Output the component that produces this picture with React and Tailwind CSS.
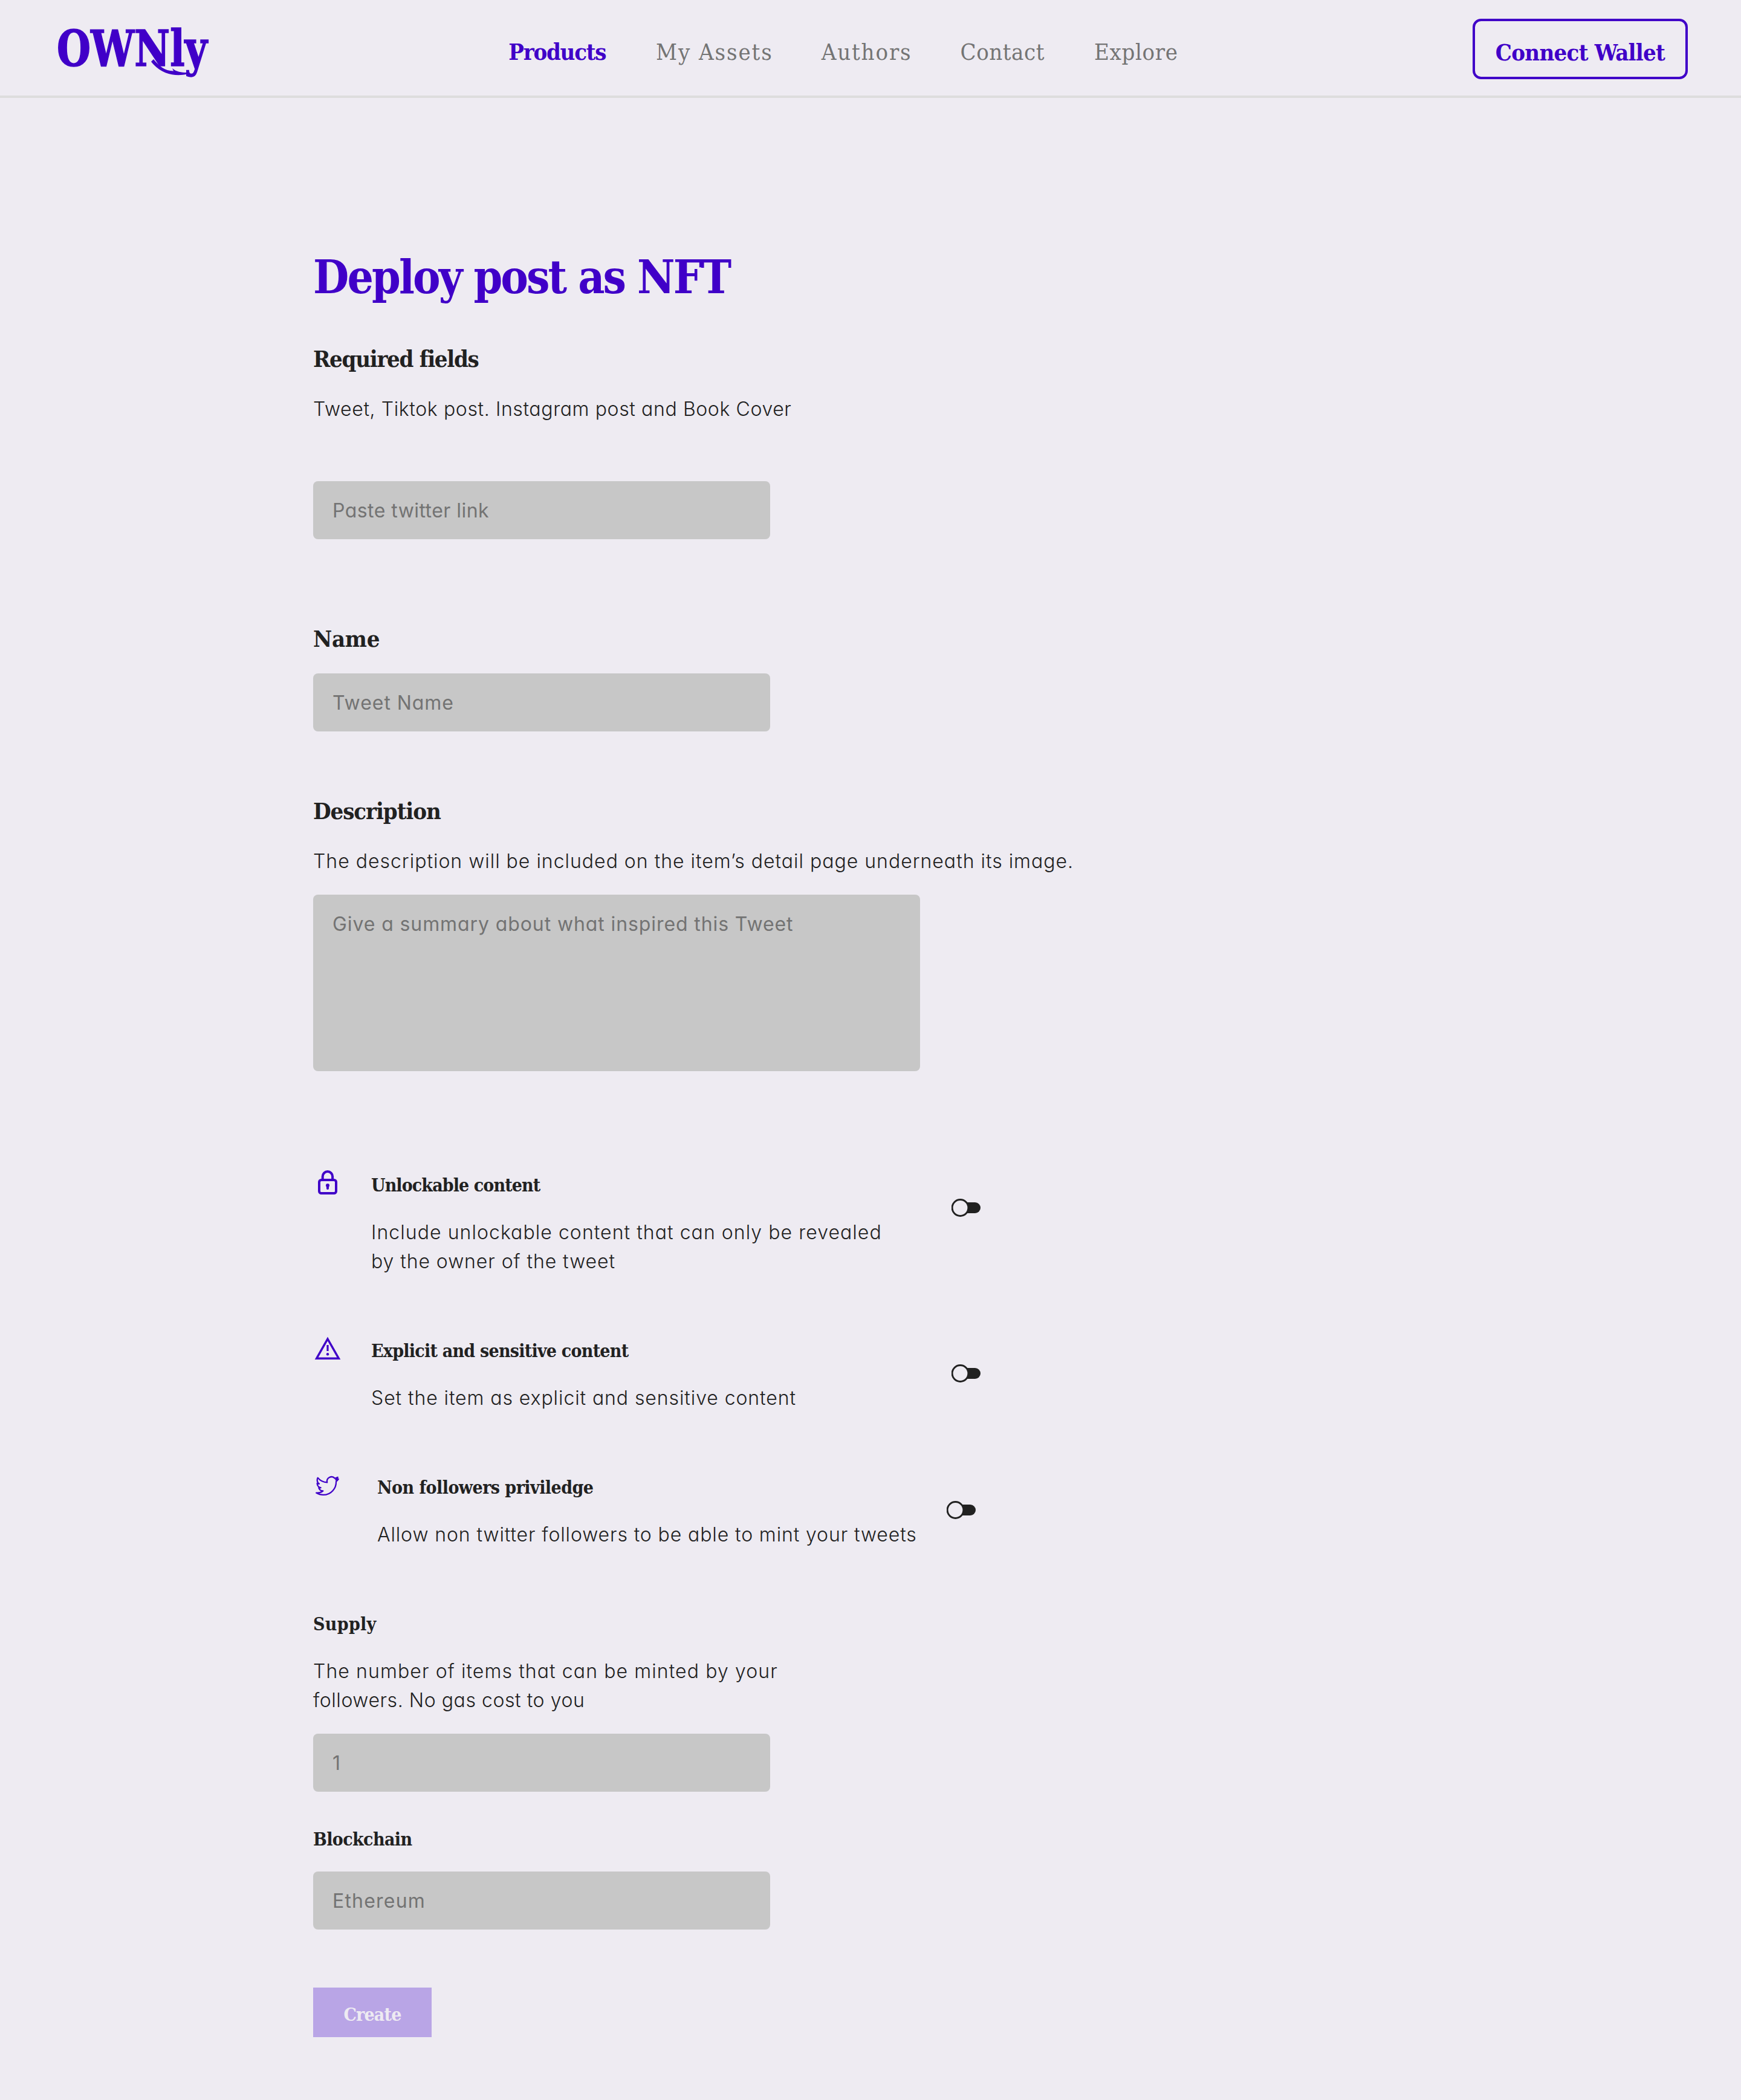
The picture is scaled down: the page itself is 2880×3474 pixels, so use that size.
import React from 'react';

function Logo() {
  return (
    <svg className="mt-11 h-[92px] w-[249px] shrink-0 overflow-visible" viewBox="95 44 249 92" fill="#4000c8" role="img" aria-label="OWNly">
      <text
        x="94"
        y="109"
        textLength="249"
        lengthAdjust="spacingAndGlyphs"
        className="font-['DejaVu_Serif_Condensed','DejaVu_Serif',serif] text-[83px] font-bold"
        stroke="#4000c8"
        strokeWidth="1.5"
      >
        OWNly
      </text>
      {/* swash that runs from the wordmark's middle to its last letter */}
      <path d="M254 98 C264 110 272 117 287 117.5 L285 113 C292 119 300 120 308 120 L310 122.5 C290 127 266 123 250 102 Z" />
    </svg>
  );
}

function LockIcon() {
  return (
    <svg className="size-12 shrink-0" viewBox="0 0 48 48" fill="none" stroke="#4000c8" strokeWidth="4">
      <rect x="10" y="20" width="28" height="22" rx="3.5" />
      <path d="M15.7 20v-5.7a8.2 8.2 0 0 1 16.4 0V20" />
      <circle cx="24" cy="29" r="3" fill="#4000c8" stroke="none" />
      <path d="M24 29v5" strokeLinecap="round" />
    </svg>
  );
}

function WarningIcon() {
  return (
    <svg className="size-12 shrink-0" viewBox="0 0 48 48" fill="none" stroke="#4000c8" strokeWidth="3.5">
      <path d="M24 9 42.3 41.2H5.7Z" />
      <path d="M24 19v10" strokeWidth="3.2" />
      <circle cx="24" cy="34.2" r="2.2" fill="#4000c8" stroke="none" />
    </svg>
  );
}

function TwitterIcon() {
  return (
    <svg className="size-12 shrink-0" viewBox="0 0 48 48" fill="none" stroke="#4000c8" strokeWidth="1.5" strokeLinejoin="round">
      <g transform="translate(5.2 7.8) scale(1.524)">
        <path d="M23.953 4.57a10 10 0 01-2.825.775 4.958 4.958 0 002.163-2.723c-.951.555-2.005.959-3.127 1.184a4.92 4.92 0 00-8.384 4.482C7.69 8.095 4.067 6.13 1.64 3.162a4.822 4.822 0 00-.666 2.475c0 1.71.87 3.213 2.188 4.096a4.904 4.904 0 01-2.228-.616v.06a4.923 4.923 0 003.946 4.827 4.996 4.996 0 01-2.212.085 4.936 4.936 0 004.604 3.417 9.867 9.867 0 01-6.102 2.105c-.39 0-.779-.023-1.17-.067a13.995 13.995 0 007.557 2.209c9.053 0 13.998-7.496 13.998-13.985 0-.21 0-.42-.015-.63A9.935 9.935 0 0024 4.59z" />
      </g>
    </svg>
  );
}

function Toggle() {
  return (
    <svg className="mt-[51px] h-[30px] w-12 shrink-0" viewBox="0 0 48 30">
      <rect x="10" y="6" width="38" height="18" rx="9" fill="#212121" />
      <circle cx="14.5" cy="15" r="13.4" fill="#eeebf2" stroke="#212121" strokeWidth="3" />
    </svg>
  );
}

const serif = "font-['DejaVu_Serif_Condensed','DejaVu_Serif',serif]";

function Heading({ className, children }) {
  return <h2 className={`${serif} text-[38px] leading-[48px] font-bold ${className}`}>{children}</h2>;
}

function SubHeading({ className, children }) {
  return <h3 className={`${serif} text-[30px] leading-[40px] font-bold ${className}`}>{children}</h3>;
}

function Field({ placeholder, className }) {
  return (
    <input
      placeholder={placeholder}
      className={`block h-24 w-[756px] rounded-lg bg-[#c7c7c7] px-8 text-[32px] outline-none placeholder:text-[#737373] placeholder:opacity-100 ${className}`}
    />
  );
}

function Option({ icon, titleClass, title, bodyClass, toggle, children }) {
  return (
    <div className="flex items-start">
      {icon}
      <div className={bodyClass}>
        <SubHeading className={titleClass}>{title}</SubHeading>
        <p className="mt-[34px] whitespace-nowrap">{children}</p>
      </div>
      {toggle}
    </div>
  );
}

export default function App() {
  return (
    <div className="h-[3474px] w-[2880px] bg-[#eeebf2] font-['Inter',sans-serif] text-[32px] leading-[48px] font-light text-[#212121] [font-feature-settings:'cv11']">
      <header className="flex h-[162px] items-start justify-between border-b-4 border-[#dddddd] pr-[88px] pl-[95px]">
        <Logo />
        <nav className={`${serif} mt-[62px] ml-[10px] flex gap-20 text-[38px] font-normal text-[#747474]`}>
          <a className="mr-[3px] font-bold tracking-[-1.3px] text-[#4000c8]">Products</a>
          <a className="tracking-[1.9px]">My Assets</a>
          <a className="tracking-[1.84px]">Authors</a>
          <a className="mr-[2px] tracking-[0.54px]">Contact</a>
          <a className="tracking-[0.64px]">Explore</a>
        </nav>
        <button className={`${serif} mt-[31px] h-[100px] w-[356px] rounded-[14px] border-4 border-[#4000c8] pt-[11px] text-[38px] font-bold tracking-[-0.75px] text-[#4000c8]`}>
          Connect Wallet
        </button>
      </header>

      <main className="flex flex-col items-start pt-[249px] pl-[518px]">
        <h1 className={`${serif} text-[76px] leading-[96px] font-bold tracking-[-2.9px] text-[#4000c8]`}>Deploy post as NFT</h1>

        <Heading className="mt-[63px] tracking-[-1.3px]">Required fields</Heading>
        <p className="mt-[35px] tracking-[0.61px]">Tweet, Tiktok post. Instagram post and Book Cover</p>
        <Field placeholder="Paste twitter link" className="mt-[95px] font-normal tracking-[0.45px]" />

        <Heading className="mt-[141px] tracking-[-0.3px]">Name</Heading>
        <Field placeholder="Tweet Name" className="mt-[33px] font-normal tracking-[0.95px]" />

        <Heading className="mt-[108px] tracking-[-1.1px]">Description</Heading>
        <p className="mt-[35px] tracking-[0.99px]">
          The description will be included on the item’s detail page underneath its image.
        </p>
        <textarea
          placeholder="Give a summary about what inspired this Tweet"
          className="mt-[31px] block h-[292px] w-[1004px] resize-none rounded-lg bg-[#c7c7c7] px-8 pt-[25px] text-[32px] font-normal tracking-[0.9px] outline-none placeholder:text-[#737373] placeholder:opacity-100"
        />

        <section className="mt-40 flex flex-col gap-[95px]">
          <Option
            icon={<LockIcon />}
            title="Unlockable content"
            titleClass="tracking-[-0.9px]"
            bodyClass="ml-12 w-[960px] pt-[9px]"
            toggle={<Toggle />}
          >
            <span className="block tracking-[1.05px]">Include unlockable content that can only be revealed</span>
            <span className="block tracking-[0.92px]">by the owner of the tweet</span>
          </Option>
          <Option
            icon={<WarningIcon />}
            title="Explicit and sensitive content"
            titleClass="tracking-[-0.76px]"
            bodyClass="ml-12 w-[960px] pt-[9px]"
            toggle={<Toggle />}
          >
            <span className="tracking-[0.91px]">Set the item as explicit and sensitive content</span>
          </Option>
          <Option
            icon={<TwitterIcon />}
            title="Non followers priviledge"
            titleClass="tracking-[-0.55px]"
            bodyClass="ml-[58px] w-[942px] pt-[9px]"
            toggle={<Toggle />}
          >
            <span className="tracking-[0.88px]">Allow non twitter followers to be able to mint your tweets</span>
          </Option>
        </section>

        <SubHeading className="mt-[104px] tracking-[0.3px]">Supply</SubHeading>
        <p className="mt-[34px] whitespace-nowrap">
          <span className="block tracking-[1.09px]">The number of items that can be minted by your</span>
          <span className="block tracking-[0.56px]">followers. No gas cost to you</span>
        </p>
        <Field placeholder="1" className="mt-[31px] font-normal" />

        <SubHeading className="mt-[59px] tracking-[-0.62px]">Blockchain</SubHeading>
        <Field placeholder="Ethereum" className="mt-[33px] font-normal tracking-[1.2px]" />

        <button className={`${serif} mt-24 h-[82px] w-[196px] bg-[#b9a5e6] pt-[8px] text-[30px] font-bold tracking-[-0.8px] text-[#eeebf2]`}>
          Create
        </button>
      </main>
    </div>
  );
}
